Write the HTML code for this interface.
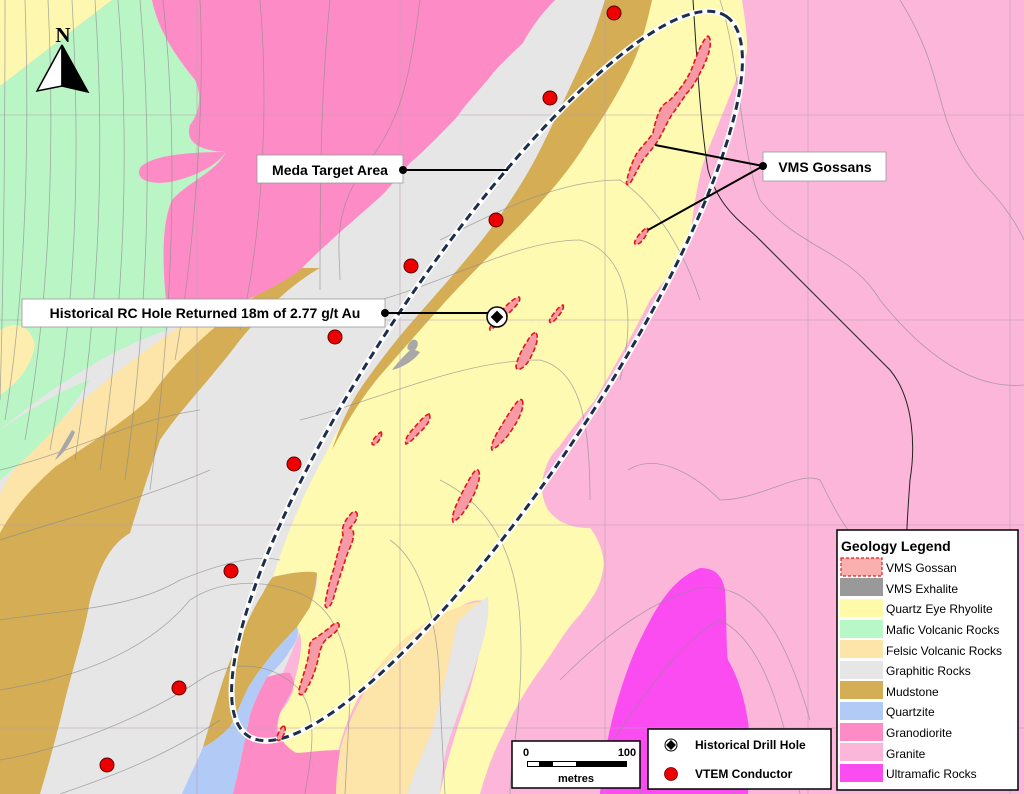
<!DOCTYPE html>
<html><head><meta charset="utf-8"><style>
html,body{margin:0;padding:0;background:#fff}
svg{display:block}
text{font-family:"Liberation Sans",sans-serif}
</style></head><body>
<svg width="1024" height="794" viewBox="0 0 1024 794" xmlns="http://www.w3.org/2000/svg">
<rect width="1024" height="794" fill="#fcb6d9"/>
<!-- graphitic (oversized, covered by later layers) -->
<path d="M520,0 L700,0 L640,120 L560,230 L480,330 L400,440 L330,560 L280,680 L250,794 L0,794 L0,300 Z" fill="#e6e6e6"/>
<path d="M0,0 L112,0 L0,86 Z" fill="#fdf7b0"/>
<path d="M0,86 L112,0 L152,0 C158,30 175,55 195,80 C202,95 200,112 190,125 C186,138 192,150 226,152 C216,172 188,182 172,200 C162,222 162,262 166,300 L168,330 C120,345 60,380 0,430 Z" fill="#baf5c6"/>
<path d="M0,330 C15,320 30,325 35,345 C30,370 15,385 0,395 Z" fill="#fdeeb0"/>
<path d="M300,268 C260,285 215,300 175,330 C130,360 80,400 40,440 C20,460 5,480 0,495 L0,535 C25,505 60,470 100,440 C150,400 210,350 250,310 Z" fill="#fde4a8"/>
<path d="M0,430 C30,410 60,390 90,380 C70,410 50,440 0,480Z" fill="#baf5c6"/>
<path d="M0,620 L8,615 L8,705 L0,710Z" fill="#baf5c6"/>
<path d="M320,268 L300,268 C260,290 220,320 185,355 C165,375 155,390 148,400 C120,425 80,450 55,467 C35,485 15,505 0,533 L0,794 L40,794 C50,760 58,730 65,700 C75,660 85,630 90,600 C100,565 110,545 130,533 C140,500 150,470 160,440 C180,410 210,380 240,340 C265,310 290,285 320,268Z" fill="#d4ad54"/>
<path d="M152,0 L555,0 C540,15 530,30 523,43 C505,60 495,70 490,77 C475,95 465,105 457,117 C440,135 425,150 410,163 C395,180 388,190 380,197 C360,215 330,240 300,270 C280,285 250,300 220,310 C195,305 178,300 166,300 C162,262 162,222 172,200 C188,182 216,172 226,152 C192,150 186,138 190,125 C200,112 202,95 195,80 C175,55 158,30 152,0Z" fill="#fd8cc6"/>
<path d="M140,168 C150,155 190,152 226,152 C215,168 190,178 170,182 C150,185 135,180 140,168Z" fill="#fd8cc6"/>
<!-- yellow rhyolite -->
<path d="M650,0 L742,0 C745,20 748,40 747,53 C738,75 732,90 727,103 C718,125 712,140 707,153 C702,165 700,175 698,185 C694,205 692,220 690,240 C680,260 665,280 650,300 C630,340 612,370 595,400 C575,425 555,450 545,470 C540,485 543,500 548,510 C560,525 575,528 590,528 C600,540 606,560 603,570 C600,590 590,600 580,615 C567,627 555,650 540,670 C525,690 513,713 500,740 C490,760 484,780 480,794 L440,794 C445,770 450,750 460,720 C470,690 480,660 488,603 C480,598 470,600 455,610 C430,620 400,640 380,665 C360,690 345,720 336,760 L330,794 L300,794 C320,770 335,760 340,750 C320,752 300,755 297,753 C280,745 275,730 280,713 C290,700 295,690 293,687 C300,660 305,640 297,627 C310,607 320,590 317,573 C300,570 280,575 273,577 C285,540 300,500 325,455 C345,415 360,395 372,380 C395,352 415,330 432,312 C462,278 490,248 518,220 C548,190 578,155 598,120 C618,85 638,45 650,0Z" fill="#fefab2"/>
<!-- mudstone NW band -->
<path d="M605,0 L652,0 C646,28 640,48 632,65 C620,90 605,115 588,140 C570,170 548,195 520,225 C495,250 470,275 445,302 C420,330 398,355 378,378 C360,400 345,425 332,450 C342,420 352,400 365,382 C382,358 400,335 418,315 C440,290 462,265 482,240 C505,210 525,180 540,150 C560,110 578,70 588,48 C596,30 600,15 605,0Z" fill="#d4ad54"/>
<path d="M273,577 C290,573 310,570 317,573 C316,590 312,600 310,607 C305,615 300,622 297,627 C285,640 275,650 270,657 C260,670 252,680 247,690 C240,705 236,715 230,727 C222,735 210,745 203,747 C208,730 214,710 220,690 C226,670 232,655 240,640 C248,620 255,605 263,593 C267,585 270,580 273,577Z" fill="#d4ad54"/>
<path d="M297,627 C300,635 295,645 290,650 C285,660 275,670 267,677 C260,690 255,700 250,715 C245,740 240,765 233,794 L182,794 C190,775 198,760 203,747 C210,745 222,735 230,727 C236,715 240,705 247,690 C252,680 260,670 270,657 C275,650 285,640 297,627Z" fill="#b2cbf6"/>
<path d="M267,677 C275,675 283,672 290,673 C294,680 295,684 293,687 C288,700 282,708 280,713 C276,725 276,732 277,733 C285,745 292,752 297,753 C310,752 325,750 340,750 C338,765 336,780 336,794 L233,794 C240,765 245,740 250,715 C255,700 260,690 267,677Z" fill="#fd8cc6"/>
<path d="M490,600 C470,602 455,608 440,615 C415,628 395,645 380,665 C365,690 348,720 340,750 C338,765 336,780 336,794 L407,794 C415,770 425,750 433,727 C440,700 448,670 457,623 C470,612 480,605 490,600Z" fill="#fde4a8"/>
<path d="M488,597 C490,620 484,640 477,660 C468,690 455,720 447,747 C443,765 441,780 440,794 L407,794 C415,770 425,750 433,727 C440,700 448,670 457,623 C468,612 478,602 488,597Z" fill="#e6e6e6"/>
<path d="M548,510 C540,495 540,480 548,462 C556,445 570,438 580,440 C580,470 575,500 548,510Z" fill="#fcb6d9"/>
<path d="M700,568 C715,568 722,575 725,590 C727,620 726,650 728,660 C740,680 748,710 750,740 L748,794 L600,794 C602,770 605,750 612,720 C620,690 630,660 640,640 C655,610 670,580 700,568Z" fill="#fb4cf2"/>
<g stroke="#b8a0b0" stroke-width="0.8" opacity="0.7">
<line x1="197" y1="0" x2="197" y2="794"/><line x1="400" y1="0" x2="400" y2="794"/>
<line x1="605" y1="0" x2="605" y2="794"/><line x1="808" y1="0" x2="808" y2="794"/>
<line x1="1010" y1="0" x2="1010" y2="794"/>
<line x1="0" y1="115" x2="1024" y2="115"/><line x1="0" y1="320" x2="1024" y2="320"/>
<line x1="0" y1="525" x2="1024" y2="525"/><line x1="0" y1="728" x2="1024" y2="728"/>
</g>
<g fill="none" stroke="#8c8c8c" stroke-width="0.8" opacity="0.7">
<path d="M5,0 C5,150 3,300 0,400"/>
<path d="M25,0 C30,150 25,300 5,420"/>
<path d="M48,0 C55,150 50,300 25,440"/>
<path d="M72,0 C80,150 78,300 50,450"/>
<path d="M95,0 C105,150 100,300 75,460"/>
<path d="M118,0 C130,150 125,300 100,470"/>
<path d="M140,0 C152,140 150,300 125,480"/>
<path d="M163,0 C178,140 175,300 150,490"/>
<path d="M200,0 C205,100 195,250 175,360"/>
<path d="M260,0 C270,120 260,250 240,330"/>
<path d="M330,0 C320,100 320,200 320,290"/>
<path d="M420,0 C410,80 400,120 370,160 C330,210 340,250 340,280"/>
<path d="M0,470 C80,450 130,420 200,410"/>
<path d="M0,540 C60,520 140,500 210,470"/>
<path d="M0,620 C60,610 130,610 180,580 C230,560 260,555 280,560"/>
<path d="M0,690 C60,680 140,660 190,600 C220,580 260,580 290,590 C330,600 350,640 350,700 L345,794"/>
<path d="M0,760 C60,750 140,720 200,680 C230,660 270,660 300,690 C320,720 310,760 305,794"/>
<path d="M60,794 C100,780 160,760 220,720"/>
<path d="M390,540 C420,560 440,620 440,700 L445,794"/>
<path d="M440,480 C480,500 515,540 520,620 C525,700 510,760 510,794"/>
<path d="M300,420 C380,400 460,360 540,360 C580,370 590,420 590,500"/>
<path d="M380,300 C450,280 520,240 580,240 C620,250 640,300 620,380"/>
<path d="M440,240 C500,210 560,180 620,180 C650,200 680,240 700,300"/>
<path d="M720,0 C740,60 740,150 760,200 C800,250 850,250 880,300 C920,350 970,390 1024,385"/>
<path d="M900,0 C950,80 930,120 980,180 C1000,200 1015,220 1024,240"/>
<path d="M628,470 C660,450 700,480 720,500 C760,500 800,470 820,480 C840,520 860,560 900,570"/>
<path d="M600,760 C640,700 680,640 720,620 C760,640 780,700 800,794"/>
<path d="M640,794 C660,760 680,740 700,745 C720,755 730,780 735,794"/>
<path d="M560,680 C600,640 650,600 700,588 C760,580 790,650 810,720"/>
</g>
<path d="M693,0 C697,60 700,120 708,170 C720,210 740,220 760,240 C810,290 860,340 890,370 C915,400 915,450 910,480 C907,520 905,560 905,600" fill="none" stroke="#222" stroke-width="1"/>
<path d="M412,340 C418,338 420,345 415,350 L420,352 C415,360 402,368 392,370 C398,362 405,355 410,350 C405,350 408,343 412,340Z" fill="#a8a8a8"/>
<path d="M72,430 L75,432 C70,445 62,455 55,460 C60,450 66,440 72,430Z" fill="#a8a8a8"/>
<g transform="rotate(-56.4 487 376)">
<ellipse cx="487" cy="376" rx="432" ry="108" fill="none" stroke="#fff" stroke-width="6"/>
<ellipse cx="487" cy="376" rx="432" ry="108" fill="none" stroke="#1c2e4a" stroke-width="3" stroke-dasharray="8,5"/>
</g>
<g fill="#f79aa6" stroke="#e01818" stroke-width="1.6" stroke-dasharray="5,2.5">
<path d="M708,36 C713,40 710,55 700,73 C695,83 692,88 687,93 C680,103 677,108 673,113 C667,122 664,130 660,137 C654,148 648,153 643,160 C638,168 635,175 632,180 C629,186 625,186 627,180 C629,170 633,160 637,153 C643,145 650,138 653,133 C655,122 658,114 660,110 C663,104 667,102 670,100 C680,90 688,78 692,68 C697,55 702,40 708,36Z"/>
<path d="M647,228 C650,230 645,238 640,243 C635,246 633,244 636,239 C640,233 644,229 647,228Z"/>
<path d="M519,297 C522,300 516,306 510,312 C504,318 497,326 490,330 C488,328 495,320 500,313 C506,305 514,298 519,297Z"/>
<path d="M563,305 C565,308 560,315 553,322 C549,324 548,321 552,316 C556,310 560,306 563,305Z"/>
<path d="M536,333 C540,338 534,352 528,362 C522,370 516,372 516,366 C518,356 524,346 528,340 C531,335 534,332 536,333Z"/>
<path d="M522,400 C525,405 520,418 513,428 C507,438 500,445 492,450 C490,446 495,436 500,428 C506,418 512,408 517,402 C519,400 521,399 522,400Z"/>
<path d="M478,470 C482,475 477,490 471,500 C466,510 460,518 453,522 C451,517 455,507 460,497 C465,487 470,477 474,472 C476,470 477,469 478,470Z"/>
<path d="M429,414 C432,418 427,426 420,432 C414,438 410,443 406,444 C404,440 409,433 414,428 C420,421 425,415 429,414Z"/>
<path d="M381,432 C383,434 380,440 376,444 C372,446 371,444 373,440 C376,436 379,433 381,432Z"/>
<path d="M356,512 C360,516 354,524 350,528 C356,530 354,540 348,552 C342,570 337,585 333,600 C330,608 326,610 325,605 C326,595 330,580 334,568 C337,555 340,545 343,535 C341,528 345,520 350,515 C352,512 354,511 356,512Z"/>
<path d="M338,623 C342,627 335,633 328,638 C322,642 320,650 318,660 C315,672 311,682 305,692 C302,696 298,696 299,690 C302,678 306,668 308,658 C310,650 308,645 312,640 C318,637 322,633 328,629 C332,625 336,622 338,623Z"/>
<path d="M284,726 C287,729 284,736 280,740 C277,742 276,739 278,734 C280,729 282,726 284,726Z"/>
</g>
<g fill="#ee0000" stroke="#5a0000" stroke-width="1">
<circle cx="614" cy="13" r="7"/><circle cx="550" cy="98" r="7"/><circle cx="496" cy="220" r="7"/>
<circle cx="411" cy="266" r="7"/><circle cx="335" cy="337" r="7"/><circle cx="294" cy="464" r="7"/>
<circle cx="231" cy="571" r="7"/><circle cx="179" cy="688" r="7"/><circle cx="107" cy="765" r="7"/>
</g>
<g stroke="#000" stroke-width="2" fill="none">
<line x1="403" y1="170" x2="508" y2="170"/>
<line x1="385" y1="313" x2="492" y2="313"/>
<line x1="655" y1="145" x2="763" y2="166"/>
<line x1="648" y1="230" x2="763" y2="166"/>
</g>
<circle cx="497" cy="317" r="10" fill="#fff" stroke="#000" stroke-width="1.5"/>
<rect x="492.5" y="312.5" width="9" height="9" fill="#000" transform="rotate(45 497 317)"/>
<rect x="257" y="155" width="146" height="28" fill="#fff" stroke="#999" stroke-width="0.8"/>
<text x="330" y="175" font-size="14" font-weight="bold" text-anchor="middle">Meda Target Area</text>
<circle cx="403" cy="170" r="4" fill="#000"/>
<rect x="22" y="299" width="363" height="28" fill="#fff" stroke="#999" stroke-width="0.8"/>
<text x="205" y="318" font-size="14" font-weight="bold" text-anchor="middle">Historical RC Hole Returned 18m of 2.77 g/t Au</text>
<circle cx="385" cy="313" r="4" fill="#000"/>
<rect x="763" y="152" width="123" height="29" fill="#fff" stroke="#999" stroke-width="0.8"/>
<text x="825" y="172" font-size="14" font-weight="bold" text-anchor="middle">VMS Gossans</text>
<circle cx="763" cy="166" r="4" fill="#000"/>
<text x="63" y="42" font-size="21" font-weight="bold" text-anchor="middle" style="font-family:'Liberation Serif',serif">N</text>
<path d="M62,45 L37,91 L62,86 Z" fill="#fff" stroke="#000" stroke-width="1.5"/>
<path d="M62,45 L88,92 L62,86 Z" fill="#000" stroke="#000" stroke-width="1.5"/>
<rect x="512" y="741" width="128" height="47" fill="#fff" stroke="#000" stroke-width="1.5"/>
<text x="526" y="756" font-size="11" font-weight="bold" text-anchor="middle">0</text>
<text x="627" y="756" font-size="11" font-weight="bold" text-anchor="middle">100</text>
<rect x="527" y="761" width="100" height="6" fill="#000"/>
<rect x="528" y="762" width="11" height="4" fill="#fff"/>
<rect x="553" y="762" width="23" height="4" fill="#fff"/>
<text x="576" y="782" font-size="11" font-weight="bold" text-anchor="middle">metres</text>
<rect x="648" y="729" width="183" height="60" fill="#fff" stroke="#000" stroke-width="1.5"/>
<circle cx="671" cy="745" r="6" fill="#fff" stroke="#000" stroke-width="1"/>
<rect x="667.5" y="741.5" width="7" height="7" fill="#000" transform="rotate(45 671 745)"/>
<text x="695" y="749" font-size="12" font-weight="bold">Historical Drill Hole</text>
<circle cx="671" cy="774" r="6.5" fill="#ee0000" stroke="#700" stroke-width="0.8"/>
<text x="695" y="778" font-size="12" font-weight="bold">VTEM Conductor</text>
<rect x="837" y="530" width="181" height="260" fill="#fff" stroke="#000" stroke-width="1.5"/>
<text x="841" y="551" font-size="14" font-weight="bold">Geology Legend</text>
<rect x="841" y="558" width="41" height="18" fill="#fbb0b0" stroke="#e02020" stroke-width="1.2" stroke-dasharray="3,2"/>
<rect x="840" y="578" width="43" height="18" fill="#999"/>
<rect x="840" y="599" width="43" height="18" fill="#fefaa8"/>
<rect x="840" y="620" width="43" height="18" fill="#b8f7c6"/>
<rect x="840" y="640" width="43" height="18" fill="#fde4a8"/>
<rect x="840" y="661" width="43" height="18" fill="#e6e6e6"/>
<rect x="840" y="681" width="43" height="18" fill="#d4ad54"/>
<rect x="840" y="702" width="43" height="18" fill="#b2cbf6"/>
<rect x="840" y="723" width="43" height="18" fill="#fd8cc6"/>
<rect x="840" y="743" width="43" height="18" fill="#fcb6d9"/>
<rect x="840" y="764" width="43" height="18" fill="#fb4cf2"/>
<g font-size="12">
<text x="886" y="572">VMS Gossan</text>
<text x="886" y="593">VMS Exhalite</text>
<text x="886" y="613">Quartz Eye Rhyolite</text>
<text x="886" y="634">Mafic Volcanic Rocks</text>
<text x="886" y="655">Felsic Volcanic Rocks</text>
<text x="886" y="675">Graphitic Rocks</text>
<text x="886" y="696">Mudstone</text>
<text x="886" y="716">Quartzite</text>
<text x="886" y="737">Granodiorite</text>
<text x="886" y="758">Granite</text>
<text x="886" y="778">Ultramafic Rocks</text>
</g>
</svg>
</body></html>
